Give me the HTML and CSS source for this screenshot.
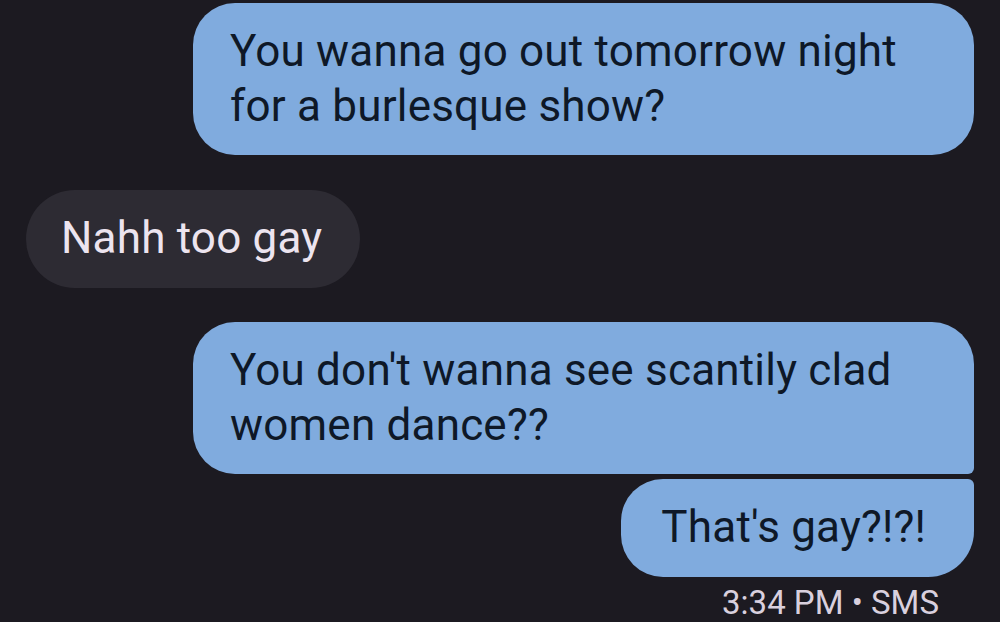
FILE: index.html
```html
<!DOCTYPE html>
<html lang="en">
<head>
    <meta charset="UTF-8">
    <meta name="viewport" content="width=device-width, initial-scale=1.0">
    <title>Messages</title>
    <link rel="stylesheet" href="styles.css">
</head>
<body>
<div class="thread">
    <div class="bubble sent">You wanna go out tomorrow night for a burlesque show?</div>
    <div class="bubble received">Nahh too gay</div>
    <div class="bubble sent group-first">You don't wanna see scantily clad women dance??</div>
    <div class="bubble sent group-last">That's gay?!?!</div>
    <div class="meta">3:34 PM • SMS</div>
</div>
</body>
</html>
```

FILE: styles.css
```css
body, html {
    margin: 0;
    padding: 0;
    width: 1000px;
    height: 622px;
    overflow: hidden;
    background-color: #1c1a21;
    font-family: Roboto, "Noto Sans", sans-serif;
}

.thread {
    display: flex;
    flex-direction: column;
    padding: 3px 26px 0 26px;
}

.bubble {
    box-sizing: border-box;
    max-width: 781px;
    padding: 21px 34px 21px 37px;
    font-size: 44px;
    line-height: 55px;
    letter-spacing: 0.2px;
    border-radius: 42px;
}

.sent {
    align-self: flex-end;
    background-color: #80abde;
    color: #0e1827;
}

.received {
    align-self: flex-start;
    margin: 35px 0 34px 0;
    padding: 21px 38px 22px 35px;
    background-color: #2d2b33;
    color: #ece4ef;
    border-radius: 49px;
}

.group-first {
    border-bottom-right-radius: 6px;
}

.group-last {
    margin-top: 5px;
    padding: 21px 48px 22px 40px;
    border-top-right-radius: 6px;
    border-bottom-right-radius: 46px;
}

.meta {
    align-self: flex-end;
    margin: 6px 35px 0 0;
    font-size: 33px;
    line-height: 40px;
    color: #d9d0de;
}
```
